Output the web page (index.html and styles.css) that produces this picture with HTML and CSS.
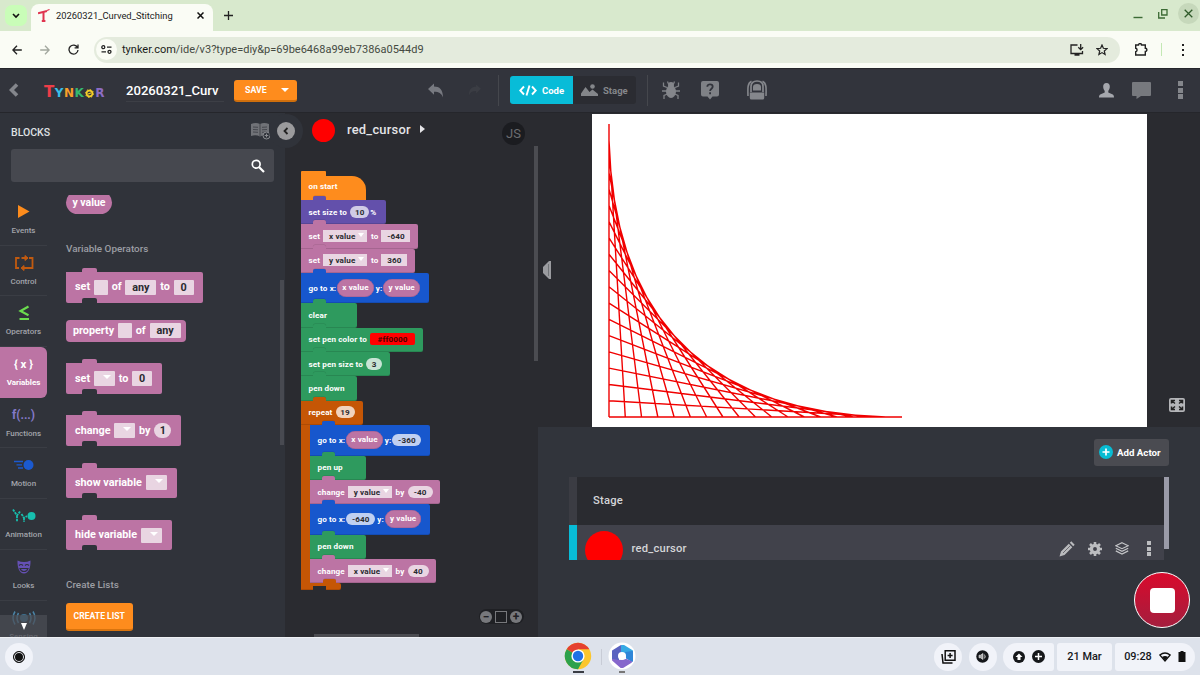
FILE: index.html
```html
<!DOCTYPE html>
<html lang="en">
<head>
    <meta charset="UTF-8">
    <title>20260321_Curved_Stitching</title>
    <link rel="stylesheet" href="styles.css">
</head>
<body>

    <!-- browser -->
    <div class="tabstrip">
        <div class="tab-search"><svg width="8" height="6" viewBox="0 0 8 6"><path d="M1 1l3 3 3-3" fill="none" stroke="#111" stroke-width="1.6"/></svg></div>
        <div class="tab">
            <svg width="12" height="13" viewBox="0 0 12 13"><path d="M0 4.200l9-2.200M5.500 3.500v9M3.800 12h3.600" fill="none" stroke="#e0344f" stroke-width="2"/><path d="M9 1.500l2.500-1" stroke="#e0344f" stroke-width="1.200"/></svg>
            <span class="tab-title">20260321_Curved_Stitching</span>
            <svg width="7" height="7" viewBox="0 0 7 7"><path d="M.5.5l6 6M6.500.5l-6 6" stroke="#111" stroke-width="1.500"/></svg>
        </div>
        <svg class="new-tab" width="9" height="9" viewBox="0 0 9 9"><path d="M4.500 0v9M0 4.500h9" stroke="#222" stroke-width="1.300"/></svg>
        <div class="win-buttons">
            <svg width="10" height="10" viewBox="0 0 10 10"><path d="M.5 8.500h9" stroke="#3c6b35" stroke-width="1.400"/></svg>
            <svg width="10" height="10" viewBox="0 0 10 10"><path d="M3.700.7h5.300v5.300H3.700zM.7 3v6H7" fill="none" stroke="#3c6b35" stroke-width="1.300"/></svg>
            <span class="win-close"><svg width="9" height="9" viewBox="0 0 9 9"><path d="M.7.7l7.600 7.600M8.300.7L.7 8.300" stroke="#2f5a2a" stroke-width="1.300"/></svg></span>
        </div>
    </div>
    <div class="toolbar">
        <svg class="nav" width="10" height="10" viewBox="0 0 10 10"><path d="M9.800 5H1M5 .8L.9 5 5 9.200" fill="none" stroke="#222" stroke-width="1.300"/></svg>
        <svg class="nav" width="10" height="10" viewBox="0 0 10 10"><path d="M.2 5H9M5 .8L9.100 5 5 9.200" fill="none" stroke="#a3a89f" stroke-width="1.300"/></svg>
        <svg class="nav" width="11" height="11" viewBox="0 0 11 11"><path d="M9.500 3.500A4.500 4.500 0 1 0 10 6M10 .5v3.400H6.600" fill="none" stroke="#222" stroke-width="1.300"/></svg>
        <div class="omnibox">
            <span class="site-info"><svg width="11" height="9" viewBox="0 0 11 9"><g fill="none" stroke="#222" stroke-width="1.300"><circle cx="2.300" cy="2.200" r="1.500"/><circle cx="8.500" cy="6.800" r="1.500"/><path d="M6 2.200h4.500M.5 6.800H5"/></g></svg></span>
            <span class="url">tynker.com<i>/ide/v3?type=diy&amp;p=69be6468a99eb7386a0544d9</i></span>
            <svg width="14" height="12" viewBox="0 0 14 12"><path d="M7.500 1H1v8.500h11.500V7M4.500 11h5" fill="none" stroke="#222" stroke-width="1.300"/><path d="M10.700 0v5.500M8.300 3.300l2.400 2.400 2.400-2.400" fill="none" stroke="#222" stroke-width="1.300"/></svg>
            <svg width="12" height="12" viewBox="0 0 12 12"><path d="M6 1l1.400 3.300 3.600.3-2.700 2.400.8 3.500L6 8.600l-3.100 1.900.8-3.500L1 4.600l3.600-.3z" fill="none" stroke="#222" stroke-width="1.200"/></svg>
        </div>
        <svg width="14" height="13" viewBox="0 0 14 13"><path d="M1.700 2h2.800a1.500 1.500 0 0 1 3 0h3.800v3.200a1.600 1.600 0 0 1 0 3.200V12H1.700V8.800a1.800 1.800 0 0 0 0-3.500z" fill="none" stroke="#222" stroke-width="1.400"/></svg>
        <span class="bar-sep"></span>
        <span class="kebab"><b></b><b></b><b></b></span>
    </div>

    <!-- editor header -->
    <div class="header">
        <svg class="back" width="10" height="14" viewBox="0 0 10 14"><path d="M8 1.500L2.500 7 8 12.500" fill="none" stroke="#84868c" stroke-width="3.600"/></svg>
        <div class="logo"><b class="l-t">T</b><b class="l-y">Y</b><b class="l-n">N</b><b class="l-k">K</b><svg width="9" height="9" viewBox="0 0 9 9"><circle cx="4.500" cy="4.500" r="2.900" fill="none" stroke="#f6cf28" stroke-width="1.600"/><circle cx="4.500" cy="4.500" r="4" fill="none" stroke="#f6cf28" stroke-width="1" stroke-dasharray="1.500 1.600"/><path d="M2.500 5.200l4-1.400" stroke="#f6cf28" stroke-width="1.200"/></svg><b class="l-r">R</b></div>
        <div class="project-name">20260321_Curv</div>
        <div class="save">SAVE <i class="caret"></i></div>
        <svg class="undo" width="16" height="15" viewBox="0 0 16 15"><path d="M6 .5v3c5.500 0 9 3 9 11C13.500 10.500 11 8.800 6 8.800v3L0 6z" fill="#777980"/></svg>
        <svg class="redo" width="15" height="12" viewBox="0 0 16 15"><path d="M10 .5v3c-5.500 0-9 3-9 11 1.500-4 4-5.700 9-5.700v3L16 6z" fill="#3b3d44"/></svg>
        <span class="head-sep"></span>
        <div class="modes">
            <div class="mode on"><svg width="18" height="11" viewBox="0 0 18 11"><path d="M5 1.500L1.200 5.500 5 9.500M13 1.500l3.800 4L13 9.500M10.500.5l-3 10" fill="none" stroke="#fff" stroke-width="1.900"/></svg>Code</div>
            <div class="mode"><svg width="17" height="12" viewBox="0 0 17 12"><path d="M0 12V9.500L4.500 3l4 5 3-2.500L17 10v2z" fill="#84868a"/><circle cx="11.500" cy="2.500" r="2.300" fill="#84868a"/></svg>Stage</div>
        </div>
        <span class="head-sep second"></span>
        <svg class="bug" width="18" height="19" viewBox="0 0 18 19"><g fill="none" stroke="#7f8186" stroke-width="1.300"><path d="M5 6.500L1.500 5V1.500M13 6.500L16.500 5V1.500M5 10H0M13 10h5M5.500 13l-3.500 1.500V18M12.500 13l3.500 1.500V18M6.500 3L5.500.5M11.500 3l1-2.500"/></g><ellipse cx="9" cy="10.500" rx="5" ry="6.500" fill="#84868b"/><circle cx="9" cy="4" r="3" fill="#84868b"/></svg>
        <svg class="help" width="18" height="19" viewBox="0 0 18 19"><path d="M2 0h14a2 2 0 0 1 2 2v11.500a2 2 0 0 1-2 2h-4.500L9 18.500l-2.500-3H2a2 2 0 0 1-2-2V2a2 2 0 0 1 2-2z" fill="#7f8186"/><path d="M6.300 5.700C6.300 2.600 11.700 2.600 11.700 5.700c0 2-2.600 2-2.600 4.300M9.100 11.300v2" fill="none" stroke="#32343c" stroke-width="1.800"/></svg>
        <svg class="bag" width="20" height="20" viewBox="0 0 20 20"><path d="M4.500 1.200C.5 3 .7 8 1 16M15.500 1.200c4 1.800 3.800 6.800 3.500 14.800" fill="none" stroke="#85878c" stroke-width="1.600"/><path d="M4 12V6.500C4 3 6.500 1 10 1s6 2 6 5.500V12" fill="none" stroke="#85878c" stroke-width="1.700"/><path d="M6 10.500V7q0-3 4-3t4 3v3.500z" fill="#85878c"/><path d="M2.800 12.500h14.400V18a1.500 1.500 0 0 1-1.500 1.500H4.300A1.500 1.500 0 0 1 2.800 18z" fill="#85878c"/></svg>
        <svg class="user" width="15" height="15" viewBox="0 0 15 15"><path d="M7.500 0C10 0 11 1.800 10.800 4c-.1 2-.9 3-1.500 3.800v1.700l4.500 2c.9.500 1.200 1.500 1.200 3H0c0-1.500.3-2.500 1.200-3l4.500-2V7.800C5 7 4.300 6 4.200 4 4 1.800 5 0 7.500 0z" fill="#a5a7ad"/></svg>
        <svg class="chat" width="19" height="17" viewBox="0 0 19 17"><path d="M1 0h17a1 1 0 0 1 1 1v12a1 1 0 0 1-1 1H9l-4.500 3V14H1a1 1 0 0 1-1-1V1a1 1 0 0 1 1-1z" fill="#77797e"/></svg>
        <span class="dots"><b></b><b></b><b></b></span>
    </div>

    <div class="main">

        <!-- block palette -->
        <div class="palette">
            <div class="palette-head">
                <span class="blocks-title">BLOCKS</span>
                <svg width="20" height="18" viewBox="0 0 20 18"><path d="M0 2q5-2 9 0 4-2 9 0v12q-5-1.500-9 .5-4-2-9-.5z" fill="#707277"/><path d="M9 2v12M2 5l5 .3M2 7.500l5 .3M2 10l5 .3M11 5.300l5-.3M11 7.800l5-.3M11 10.300l5-.3" stroke="#32343b" stroke-width=".7"/><circle cx="15.500" cy="13.500" r="3.500" fill="#30333a" stroke="#8a8c90"/><path d="M15.500 11.700v3.600M13.700 13.500h3.600" stroke="#8a8c90"/></svg>
                <span class="collapse"><svg width="18" height="18" viewBox="0 0 18 18"><circle cx="9" cy="9" r="9" fill="#9b9b9d"/><path d="M10.500 6L7.500 9l3 3" fill="none" stroke="#222" stroke-width="1.800"/></svg></span>
            </div>
            <div class="search"><svg width="14" height="14" viewBox="0 0 14 14"><circle cx="5.200" cy="5.200" r="3.900" fill="none" stroke="#fff" stroke-width="1.700"/><path d="M8 8l5 5" stroke="#fff" stroke-width="2.200"/></svg></div>
            <div class="palette-body">
                <div class="cats">
                    <div class="cat"><svg width="24" height="16" viewBox="0 0 24 16"><path d="M6 1l11.500 6.500L6 14z" fill="#fd8c1c"/></svg>Events</div>
                    <div class="cat"><svg width="24" height="16" viewBox="0 0 24 16"><path d="M7.500 3H4v10h3M17 3h3.500v10H12M10 3h6M15 13h-5" fill="none" stroke="#c05a10" stroke-width="1.800"/><path d="M9 3h5M13 .5L16 3l-3 2.500zM12 10.500L9 13l3 2.500z" fill="#c05a10" stroke="#c05a10"/></svg>Control</div>
                    <div class="cat"><svg width="24" height="16" viewBox="0 0 24 16"><path d="M16.500 1.500L8.500 6l8 4.200M7.500 14h9.500" fill="none" stroke="#6bdc4e" stroke-width="2.100"/></svg>Operators</div>
                    <div class="cat active"><span class="glyph">{ x }</span>Variables</div>
                    <div class="cat"><span class="glyph fn">f(...)</span>Functions</div>
                    <div class="cat"><svg width="24" height="16" viewBox="0 0 24 16"><circle cx="16.500" cy="8" r="5" fill="#1b5ad0"/><path d="M2 4.500h9M4.500 7.800H10M6 11h5" stroke="#1b5ad0" stroke-width="1.300"/></svg>Motion</div>
                    <div class="cat"><svg width="24" height="16" viewBox="0 0 24 16"><circle cx="19.500" cy="8" r="4" fill="#17bfae"/><path d="M1 1.500l4 6 3-4M5 7.500V14M9.500 6l2.500 4 3-2M12 10v4" fill="none" stroke="#17bfae" stroke-width="1.800" stroke-dasharray="2.500 .8"/></svg>Animation</div>
                    <div class="cat"><svg width="24" height="16" viewBox="0 0 24 16"><path d="M5.500 1.500q6.500 3 13 0c.3 7-2 13-6.500 13s-6.800-6-6.500-13z" fill="#6550b4"/><path d="M7 6.500q2-2 4 0M13 6.500q2-2 4 0M8 9.500h8q-1 3-4 3t-4-3z" fill="none" stroke="#2f3239" stroke-width="1.100"/></svg>Looks</div>
                    <div class="cat"><svg width="24" height="16" viewBox="0 0 24 16"><circle cx="12" cy="8" r="4" fill="#3d6f8e"/><path d="M6.500 3q-3 5 0 10M17.500 3q3 5 0 10M3 1.500q-4 6.500 0 13M21 1.500q4 6.500 0 13" fill="none" stroke="#4a83a5" stroke-width="1.500"/></svg>Sensing</div>
                    <div class="cats-more"><svg width="6" height="7" viewBox="0 0 6 7"><path d="M0 0h6L3 7z" fill="#fff"/></svg></div>
                </div>
                <div class="list">
                    <div class="pill">y value</div>
                    <div class="list-title">Variable Operators</div>
                    <div class="pblock w136">set <i class="slot w14"></i> of <i class="slot w31">any</i> to <i class="slot w20">0</i></div>
                    <div class="preporter">property <i class="slot w14"></i> of <i class="slot w31">any</i></div>
                    <div class="pblock w96">set <i class="slot w21"><i class="caret"></i></i> to <i class="slot w20">0</i></div>
                    <div class="pblock w115">change <i class="slot w21"><i class="caret"></i></i> by <i class="slot round">1</i></div>
                    <div class="pblock w111">show variable <i class="slot w21"><i class="caret"></i></i></div>
                    <div class="pblock w106">hide variable <i class="slot w21"><i class="caret"></i></i></div>
                    <div class="list-title lists">Create Lists</div>
                    <div class="create">CREATE LIST</div>
                </div>
                <div class="palette-scroll"></div>
            </div>
        </div>

        <!-- script workspace -->
        <div class="workspace">
            <div class="actor-head">
                <span class="red-dot"></span>
                <span class="actor-name">red_cursor</span>
                <i class="arrow"></i>
                <span class="js">JS</span>
            </div>
            <div class="script">
                <div class="hat">on start</div>
                <div class="block looks w85">set size to <i class="val oval w19">10</i><span>%</span></div>
                <div class="block vars w117">set <i class="val w44">x value<i class="caret"></i></i> to <i class="val w29">-640</i></div>
                <div class="block vars w114">set <i class="val w44">y value<i class="caret"></i></i> to <i class="val w26">360</i></div>
                <div class="block motion w128">go to x:<i class="var">x value</i> <span class="yl">y:</span><i class="var">y value</i></div>
                <div class="block pen w56">clear</div>
                <div class="block pen w122">set pen color to <i class="val hex">#ff0000</i></div>
                <div class="block pen w88">set pen size to <i class="val oval w16">3</i></div>
                <div class="block pen w56">pen down</div>
                <div class="block control w62">repeat <i class="val oval w19">19</i></div>
                <div class="loop">
                    <div class="block motion w120">go to x:<i class="var">x value</i> <span class="yl">y:</span><i class="val oval w29">-360</i></div>
                    <div class="block pen w56">pen up</div>
                    <div class="block vars w130">change <i class="val w44">y value<i class="caret"></i></i> by <i class="val oval w25">-40</i></div>
                    <div class="block motion w120">go to x:<i class="val oval w29">-640</i> <span class="yl">y:</span><i class="var">y value</i></div>
                    <div class="block pen w56">pen down</div>
                    <div class="block vars w126">change <i class="val w44">x value<i class="caret"></i></i> by <i class="val oval w21">40</i></div>
                </div>
                <div class="block control foot"></div>
            </div>
            <div class="v-scroll"></div>
            <div class="h-scroll"></div>
            <div class="zoomer"><b>−</b><i></i><b>+</b></div>
        </div>

        <!-- stage and actors -->
        <div class="right">
            <div class="stage-area">
                <svg class="drag" width="8" height="18" viewBox="0 0 8 18"><path d="M8 0v18H6L0 12V6l6-6z" fill="#9a9b9f"/><path d="M5.500 3v12" stroke="#66686d" stroke-width=".8"/></svg>
                <div class="stage">
                    <svg viewBox="0 0 18 18" width="293" height="293"><path d="M0 0L0 18M0 1L1 18M0 2L2 18M0 3L3 18M0 4L4 18M0 5L5 18M0 6L6 18M0 7L7 18M0 8L8 18M0 9L9 18M0 10L10 18M0 11L11 18M0 12L12 18M0 13L13 18M0 14L14 18M0 15L15 18M0 16L16 18M0 17L17 18M0 18L18 18" fill="none" stroke="#f00000" stroke-width=".086"/></svg>
                </div>
                <svg class="full" width="16" height="14" viewBox="0 0 16 14"><rect width="16" height="14" rx="2" fill="#b4b5b8"/><path d="M2.500 5.500v-3H6M10 2.500h3.500v3M13.500 8.500v3H10M6 11.500H2.500v-3M3 3l3 2.500M13 3l-3 2.500M13 11l-3-2.500M3 11l3-2.500" fill="none" stroke="#222" stroke-width="1.500"/></svg>
            </div>
            <div class="actors">
                <div class="add"><svg width="14" height="14" viewBox="0 0 14 14"><circle cx="7" cy="7" r="7" fill="#08bcd3"/><path d="M7 3.500v7M3.500 7h7" stroke="#fff" stroke-width="1.700"/></svg>Add Actor</div>
                <div class="actor-list">
                    <div class="rows">
                        <div class="row">Stage</div>
                        <div class="row selected">
                            <span class="big-dot"></span>
                            <span>red_cursor</span>
                            <span class="row-icons">
                                <svg width="16" height="16" viewBox="0 0 16 16"><path d="M2 10.500l7.800-7.800 3.500 3.500-7.800 7.800L.5 15.500zM10.800 1.800L12.300.3l3.400 3.400-1.500 1.500z" fill="#b9babd"/><path d="M4 12l7.500-7.500" stroke="#55565c" stroke-width=".8"/></svg>
                                <svg width="14" height="14" viewBox="0 0 14 14"><circle cx="7" cy="7" r="3.600" fill="none" stroke="#bcbdc0" stroke-width="3.300"/><path d="M7 0v3M7 11v3M0 7h3M11 7h3M2 2l2.200 2.200M9.800 9.800L12 12M12 2L9.800 4.200M4.200 9.800L2 12" stroke="#bcbdc0" stroke-width="2.600"/></svg>
                                <svg width="14" height="13" viewBox="0 0 14 13"><path d="M7 .7l6.200 3L7 6.700.8 3.700zM.8 6.300L7 9.300l6.200-3M.8 8.900L7 12l6.200-3.100" fill="none" stroke="#c4c5c8" stroke-width="1.200"/></svg>
                                <span class="dots small"><b></b><b></b><b></b></span>
                            </span>
                        </div>
                    </div>
                    <div class="actor-scroll"></div>
                </div>
                <div class="stop"><i></i></div>
            </div>
        </div>
    </div>

    <!-- shelf -->
    <div class="shelf">
        <div class="launcher"><i></i></div>
        <div class="apps">
            <div class="app">
                <svg width="28" height="28" viewBox="0 0 28 28"><circle cx="14" cy="14" r="13.200" fill="#fbc62d"/><path d="M14 14L2.700 7.200A13.200 13.200 0 0 1 25.300 7.200H14z" fill="#e5412f"/><path d="M14 14L2.700 7.200A13.200 13.200 0 0 0 14 27.200l5.500-10z" fill="#2ca14b"/><circle cx="14" cy="14" r="6.600" fill="#fff"/><circle cx="14" cy="14" r="5.200" fill="#2071e6"/></svg>
                <i class="run"></i>
            </div>
            <span class="app-sep"></span>
            <div class="app">
                <svg width="28" height="28" viewBox="0 0 28 28"><circle cx="14" cy="14" r="13.500" fill="#fff"/><g stroke-linejoin="round" stroke-width="2"><path d="M5 9l8-5v6l-3 3v7l-5-3z" fill="#5a62c0" stroke="#5a62c0"/><path d="M14 4h2l8 5v4l-6-3h-4z" fill="#36a9e4" stroke="#36a9e4"/><path d="M24 10v9l-5-3-1-5z" fill="#2f86d8" stroke="#2f86d8"/><path d="M5 18l5 1 8-1 5 2-8 5h-2z" fill="#8667cc" stroke="#8667cc"/></g><circle cx="14" cy="14" r="4" fill="#fff"/></svg>
                <i class="run short"></i>
            </div>
        </div>
        <div class="tray">
            <span class="bubble"><svg width="15" height="14" viewBox="0 0 15 14"><path d="M4.200.8h9.800v9.500H4.200zM9.100 3v5M6.600 5.500h5" fill="none" stroke="#111" stroke-width="1.500"/><path d="M1 4l1 9h9.500" fill="none" stroke="#111" stroke-width="1.500"/></svg></span>
            <span class="bubble"><svg width="13" height="13" viewBox="0 0 13 13"><circle cx="6.500" cy="6.500" r="6.200" fill="#15171a"/><path d="M3 5.200h1.500L7 3.500v6L4.500 7.800H3zM8.500 4.500q1.500 2 0 4" fill="#aaa" stroke="#eee" stroke-width=".6"/></svg></span>
            <span class="group g-left"><svg width="12" height="12" viewBox="0 0 12 12"><circle cx="6" cy="6" r="6" fill="#15171a"/><path d="M6 2.500L9.500 6H7.500v3h-3V6h-2z" fill="#fff"/></svg><svg width="13" height="13" viewBox="0 0 13 13"><circle cx="6.500" cy="6.500" r="6.500" fill="#15171a"/><path d="M6.500 3v7M3 6.500h7" stroke="#fff" stroke-width="1.500"/></svg></span>
            <span class="group g-date">21 Mar</span>
            <span class="group g-time">09:28 <svg width="12" height="10" viewBox="0 0 12 10"><path d="M.8 3q5.200-4 10.400 0L6 9z" fill="none" stroke="#111" stroke-width="1.300"/><path d="M3 5q3-2 6 0L6 8.500z" fill="#111"/></svg><svg width="8" height="11" viewBox="0 0 8 11"><path d="M2.500 0h3v1H7.500v10H.5V1h2z" fill="#111"/></svg></span>
        </div>
    </div>
</body>
</html>
```

FILE: styles.css
```css
* {
    box-sizing: border-box;
}

body {
    margin: 0;
    width: 1200px;
    height: 675px;
    overflow: hidden;
    background: #2a2b30;
    font-family: Roboto, "Liberation Sans", sans-serif;
    color: white;
}

i {
    font-style: normal;
}

svg {
    display: block;
    flex: none;
}

/* browser */
.tabstrip {
    display: flex;
    align-items: center;
    height: 31px;
    background: #d8e9cd;
    padding-left: 5px;
}

.tab-search {
    display: flex;
    align-items: center;
    justify-content: center;
    width: 22px;
    height: 21px;
    border-radius: 7px;
    background: #c9fdb8;
}

.tab {
    display: flex;
    align-items: center;
    align-self: flex-end;
    width: 182px;
    height: 27px;
    margin-left: 4px;
    padding: 0 9px 4px 7px;
    border-radius: 8px 8px 0 0;
    background: #fafcf5;
}

.tab-title {
    flex: 1;
    margin-left: 6px;
    font-size: 9.400px;
    color: #222;
}

.new-tab {
    margin-left: 11px;
}

.win-buttons {
    display: flex;
    align-items: center;
    gap: 15px;
    margin-left: auto;
    margin-bottom: 4px;
    padding-right: 1px;
}

.win-close {
    display: flex;
    align-items: center;
    justify-content: center;
    width: 21px;
    height: 21px;
    margin-left: -5px;
    border-radius: 50%;
    background: #c6d8bb;
}

.toolbar {
    display: flex;
    align-items: center;
    height: 37px;
    padding-left: 12px;
    background: #fafcf5;
}

.nav {
    margin-right: 18px;
}

.nav + .nav + .nav {
    margin-right: 15px;
}

.omnibox {
    display: flex;
    align-items: center;
    width: 1026px;
    height: 26px;
    margin-right: 14px;
    padding: 0 12px 0 2px;
    border-radius: 13px;
    background: #e4ebdd;
}

.site-info {
    display: flex;
    align-items: center;
    justify-content: center;
    width: 21px;
    height: 21px;
    border-radius: 50%;
    background: #fafcf5;
}

.url {
    flex: 1;
    margin-left: 5px;
    font-size: 11px;
    color: #1a1c19;
}

.url i {
    color: #454a42;
}

.omnibox > svg + svg {
    margin-left: 12px;
}

.bar-sep {
    width: 1px;
    height: 13px;
    margin: 0 20px 0 13px;
    background: #c3e8b4;
}

.kebab b {
    display: block;
    width: 2px;
    height: 2px;
    margin: 3px 0;
    background: #222;
}

/* editor header */
.header {
    display: flex;
    align-items: center;
    height: 45px;
    padding-bottom: 1px;
    border-bottom: 1px solid #25262b;
    border-top: 1px solid #25262b;
    background: #32343c;
}

.back {
    margin-left: 9px;
}

.logo {
    display: flex;
    align-items: baseline;
    gap: .500px;
    width: 62px;
    margin: 3px 0 0 25px;
    font: bold 12px "DejaVu Sans", sans-serif;
}

.logo svg {
    align-self: center;
    margin: 3px 1px 0 .500px;
}

.l-t { color: #ee3d48; font-size: 15px; }
.l-y { color: #38bfe8; }
.l-n { color: #f9a02a; }
.l-k { color: #35b870; }
.l-r { color: #8d6cc4; }

.project-name {
    width: 98px;
    margin-left: 20px;
    padding: 3px 0 2px;
    border-bottom: 1px solid #3d3f46;
    font-size: 13.100px;
    font-weight: 500;
    line-height: 17px;
}

.caret {
    display: block;
    border: 4px solid transparent;
    border-top: 4px solid white;
    border-bottom: 0;
}

.save {
    display: flex;
    align-items: center;
    justify-content: space-between;
    width: 63px;
    height: 22px;
    margin: 1px 0 0 10px;
    padding: 1px 8px 0 11px;
    border-bottom: 2px solid #d06f0c;
    border-radius: 3px;
    background: #fe8c1d;
    font-size: 8.800px;
    font-weight: bold;
}

.undo {
    margin-left: 131px;
}

.redo {
    margin-left: 23px;
}

.head-sep {
    width: 1px;
    height: 31px;
    margin-left: 16px;
    background: #45474d;
}

.modes {
    display: flex;
    height: 28px;
    margin-left: 11px;
    border-radius: 3px;
    overflow: hidden;
    background: #2b2c32;
}

.mode {
    display: flex;
    align-items: center;
    gap: 5px;
    width: 63px;
    padding-left: 8px;
    font-size: 9.500px;
    font-weight: bold;
    color: #85878b;
}

.mode.on {
    padding-left: 9px;
    background: #08bcd8;
    color: white;
}

.head-sep.second {
    margin-left: 11px;
}

.bug { margin-left: 14px; }
.help { margin-left: 21px; }
.bag { margin-left: 28px; }
.user { margin-left: 332px; }
.chat { margin-left: 18px; }

.dots {
    margin-left: 27px;
}

.dots b {
    display: block;
    width: 5px;
    height: 5px;
    margin: 1.500px 0;
    background: #84868b;
}

/* palette */
.main {
    display: flex;
    height: 524px;
}

.palette {
    width: 284.500px;
    height: 524px;
    background: #30333a;
}

.palette-head {
    display: flex;
    align-items: center;
    height: 36px;
    padding-left: 11px;
    font-size: 10.500px;
    font-weight: 500;
    color: #dfe0e3;
}

.blocks-title {
    padding-top: 3px;
}

.palette-head > svg {
    margin-left: auto;
}

.collapse {
    position: relative;
    z-index: 1;
    margin: -1px -18px 0 -2px;
    padding: 8px;
    border-radius: 50%;
    background: #30333a;
}

.search {
    display: flex;
    align-items: center;
    justify-content: flex-end;
    width: 263px;
    height: 33px;
    margin-left: 11px;
    padding-right: 9px;
    border-radius: 3px;
    background: #46484f;
}

.palette-body {
    display: flex;
    height: 442px;
    margin-top: 13px;
    overflow: hidden;
}

.cats {
    position: relative;
    width: 47px;
    height: 442px;
    overflow: hidden;
}

.cat {
    display: flex;
    flex-direction: column;
    align-items: center;
    height: 50.700px;
    padding-top: 9px;
    border-bottom: 1px solid #3a3d44;
    font-size: 8px;
    font-weight: 500;
    line-height: 11px;
    color: #a2a4aa;
}

.cat svg,
.glyph {
    height: 16px;
    margin-bottom: 5px;
}

.glyph {
    font-size: 11.500px;
    font-weight: bold;
    line-height: 16px;
}

.fn {
    font-size: 12px;
    color: #8479c8;
}

.cat.active {
    border: 0;
    border-radius: 0 6px 6px 0;
    background: #bc74a4;
    color: white;
    font-weight: bold;
}

.cats-more {
    display: flex;
    position: absolute;
    left: 0;
    bottom: 0;
    align-items: center;
    justify-content: center;
    width: 47px;
    height: 22px;
    background: rgba(76, 79, 86, .7);
}

.list {
    width: 215px;
    padding-left: 19px;
    font-size: 10.800px;
    font-weight: bold;
}

.pill {
    width: 46px;
    height: 23px;
    margin-top: -4px;
    border-radius: 12px;
    background: #bc74a4;
    line-height: 23px;
    text-align: center;
    font-size: 10.500px;
}

.list-title {
    margin: 28px 0 16px;
    font-size: 9.900px;
    font-weight: 500;
    line-height: 14px;
    color: #9c9ea4;
}

.pblock,
.preporter {
    display: flex;
    align-items: center;
    gap: 3.800px;
    height: 30.800px;
    padding: 0 0 1px 9px;
    border-radius: 0 2px 2px 2px;
    background: #bc74a4;
    white-space: nowrap;
}

.pblock {
    position: relative;
    margin-bottom: 21.300px;
}

.pblock::before,
.pblock::after {
    content: "";
    position: absolute;
    left: 16px;
    width: 15px;
    height: 5px;
    border-radius: 2px 2px 0 0;
}

.pblock::before {
    top: -4.500px;
    background: #bc74a4;
}

.pblock::after {
    bottom: 0;
    background: #30333a;
}

.pblock.w136 {
    margin-bottom: 17px;
}

.preporter {
    width: 120px;
    height: 22px;
    margin-bottom: 21.600px;
    padding-left: 7px;
    border-radius: 4px;
}

.slot {
    display: flex;
    align-items: center;
    justify-content: center;
    flex: none;
    height: 15px;
    margin-top: 1px;
    border-radius: 1px;
    background: #e9d5e2;
    font-weight: bold;
    color: #2a2b30;
}

.slot.round {
    width: 17px;
    border-radius: 8px;
}

.slot .caret {
    margin: -3px 0 0 5px;
}

.lists {
    margin: 27.500px 0 11.500px;
}

.create {
    width: 66.500px;
    height: 28px;
    border-bottom: 2px solid #d9740e;
    border-radius: 3px;
    background: #fe8c1d;
    font-size: 8.600px;
    line-height: 26px;
    text-align: center;
}

.palette-scroll {
    width: 4px;
    height: 165px;
    margin: 85px 0 0 18px;
    background: #484a51;
}

/* workspace */
.workspace {
    position: relative;
    width: 253.500px;
    height: 524px;
    background: #2a2b30;
}

.actor-head {
    display: flex;
    align-items: center;
    height: 36px;
    padding: 0 0 2px 27.500px;
}

.red-dot {
    width: 23px;
    height: 23px;
    border-radius: 50%;
    background: red;
}

.actor-name {
    margin: -2px 0 0 12px;
    font-size: 12.900px;
    font-weight: 500;
    letter-spacing: .25px;
    color: #e4e4e7;
}

.arrow {
    margin: -2px 0 0 9px;
    border: 4px solid transparent;
    border-left: 5px solid #e4e4e7;
    border-right: 0;
}

.js {
    width: 23px;
    height: 23px;
    margin: 7px 13px 0 auto;
    border-radius: 50%;
    background: #1b1c20;
    font-size: 13px;
    line-height: 24px;
    text-align: center;
    color: #6b6c70;
}

.script {
    margin: 26.500px 0 0 16.500px;
    font-size: 8.100px;
    font-weight: bold;
    letter-spacing: .12px;
}

.hat {
    position: relative;
    width: 65px;
    height: 24.500px;
    padding: 5px 0 0 7.500px;
    border-radius: 0 14px 0 0;
    background: #fe8c1d;
}

.hat::before {
    content: "";
    position: absolute;
    left: 0;
    top: -4.500px;
    width: 25px;
    height: 5px;
    border-radius: 1px 1px 0 0;
    background: #fe8c1d;
}

.block {
    display: flex;
    position: relative;
    align-items: center;
    height: 24.300px;
    padding: 0 0 1px 7.500px;
    border-radius: 0 2px 2px 0;
    box-shadow: inset 0 -1px 0 rgba(0, 0, 0, .12);
    white-space: pre;
}

.block::before {
    content: "";
    position: absolute;
    left: 12px;
    top: -4px;
    width: 13px;
    height: 5px;
    border-radius: 2px 2px 0 0;
    background: inherit;
    box-shadow: 0 -.500px 0 rgba(0, 0, 0, .15);
}

.looks { background: #6350ab; }
.vars { background: #bc74a4; }
.pen { background: #2e9a5e; }
.control { background: #c55605; }

.motion {
    height: 30.600px;
    background: #1757cd;
}

.val {
    display: flex;
    align-items: center;
    justify-content: center;
    flex: none;
    height: 12px;
    margin: 0 1.500px 0 1px;
    background: #e9d5e2;
    font-weight: bold;
    color: #2a2b30;
}

.val .caret {
    margin: -2px -3px 0 3px;
    border-width: 4px 3px 0;
}

.oval { border-radius: 6px; }
.looks .val { background: #d0cbe6; }
.motion .val { background: #c0d0f1; }
.pen .val { background: #c8e4d5; }
.control .val { background: #f1d3bd; }

.looks .val {
    margin-right: 1px;
}

.pen .hex {
    width: 45px;
    border-radius: 2px;
    background: red;
    color: #4a0000;
}

.var {
    flex: none;
    width: 36.500px;
    height: 18px;
    margin: 0 1.500px 0 1px;
    border-radius: 9px;
    background: #bc74a4;
    box-shadow: inset 0 0 0 .500px #9a5c93;
    line-height: 17px;
    text-align: center;
}

.yl {
    margin-left: .500px;
}

.loop {
    padding-left: 9px;
    background: linear-gradient(90deg, #c55605 10px, transparent 10px);
}

.foot {
    width: 40px;
    height: 7px;
}

.foot::before {
    left: 22px;
}

.foot::after {
    content: "";
    position: absolute;
    left: 12px;
    bottom: 0;
    width: 13px;
    height: 4px;
    background: #2a2b30;
}

.w14 { width: 14px; }
.w16 { width: 16px; }
.w19 { width: 19px; }
.w20 { width: 20px; }
.w21 { width: 21px; }
.w25 { width: 25px; }
.w26 { width: 26px; }
.w29 { width: 29px; }
.w31 { width: 31px; }
.w44 { width: 44px; }
.w56 { width: 56px; }
.w62 { width: 62px; }
.w85 { width: 85px; }
.w88 { width: 88.500px; }
.w96 { width: 96px; }
.w106 { width: 106px; }
.w111 { width: 111px; }
.w114 { width: 114px; }
.w115 { width: 115px; }
.w117 { width: 117px; }
.w120 { width: 120px; }
.w122 { width: 122px; }
.w126 { width: 126px; }
.w128 { width: 128px; }
.w130 { width: 129.500px; }
.w136 { width: 136.500px; }

.v-scroll {
    position: absolute;
    right: 0;
    top: 33px;
    width: 4px;
    height: 215px;
    background: #4b4c51;
}

.h-scroll {
    position: absolute;
    left: 29px;
    bottom: 0;
    width: 105px;
    height: 3px;
    background: #4b4c51;
}

.zoomer {
    display: flex;
    position: absolute;
    right: 14.500px;
    bottom: 13px;
    align-items: center;
    gap: 3px;
    padding: 1.500px;
    border-radius: 8px;
    background: #1f2024;
}

.zoomer b {
    width: 12px;
    height: 12px;
    border-radius: 50%;
    background: #77787c;
    font-size: 12px;
    line-height: 12px;
    text-align: center;
    color: #1f2024;
}

.zoomer i {
    width: 12px;
    height: 12px;
    border: 1px solid #77787c;
}

/* right side */
.right {
    flex: 1;
}

.stage-area {
    display: flex;
    height: 314px;
    background: #2a2b30;
}

.drag {
    align-self: center;
    margin-left: 5px;
}

.stage {
    width: 555px;
    height: 313px;
    margin: 1px 0 0 41px;
    padding: 10px 0 0 17px;
    background: white;
}

.stage svg {
    overflow: visible;
}

.full {
    align-self: flex-end;
    margin: 0 0 15px 22px;
}

.actors {
    position: relative;
    height: 210px;
    padding: 12px 31px 0;
    background: #31343b;
}

.add {
    display: flex;
    align-items: center;
    gap: 4px;
    width: 75px;
    height: 27px;
    margin-left: auto;
    padding: 0 0 1px 5px;
    border-radius: 3px;
    background: #4a4b51;
    font-size: 9.700px;
    font-weight: bold;
    white-space: nowrap;
}

.actor-list {
    display: flex;
    height: 83px;
    margin-top: 11px;
    overflow: hidden;
}

.rows {
    flex: 1;
}

.row {
    display: flex;
    align-items: center;
    height: 48px;
    padding: 0 0 1px 16px;
    border-left: 8px solid #3b3c43;
    background: #2a2b30;
    font-size: 11.200px;
    font-weight: 500;
    letter-spacing: .200px;
    color: #d4d5d8;
}

.row.selected {
    padding-left: 8px;
    border-left-color: #08bcd8;
    background: #41424b;
}

.big-dot {
    width: 38px;
    height: 38px;
    margin: 2px 8.500px 0 0;
    border-radius: 50%;
    background: red;
}

.row-icons {
    display: flex;
    align-items: center;
    gap: 13px;
    margin: 0 13px 0 auto;
}

.dots.small {
    margin-left: 5px;
}

.small b {
    width: 4px;
    height: 4px;
    background: #bcbdc0;
}

.actor-scroll {
    width: 5px;
    height: 72px;
    background: #9a9ba8;
}

.stop {
    display: flex;
    position: absolute;
    right: 10px;
    bottom: 9px;
    align-items: center;
    justify-content: center;
    width: 56px;
    height: 56px;
    border: 1.500px solid white;
    border-radius: 50%;
    background: linear-gradient(#d90a2c, #a41e3e);
}

.stop i {
    width: 25px;
    height: 25px;
    border-radius: 4px;
    background: white;
}

/* shelf */
.shelf {
    display: flex;
    align-items: center;
    height: 38px;
    padding: 0 5px;
    border-top: 1px solid #eef0f4;
    background: #dde2eb;
}

.launcher {
    display: flex;
    align-items: center;
    justify-content: center;
    width: 28px;
    height: 28px;
    border-radius: 50%;
    background: #f1f3f9;
}

.launcher i {
    width: 12px;
    height: 12px;
    border: 1px solid #111;
    border-radius: 50%;
    background: #111;
    box-shadow: inset 0 0 0 1px #f1f3f9;
}

.apps {
    display: flex;
    align-items: center;
    margin-left: 531px;
}

.app {
    padding-top: 2px;
}

.run {
    display: block;
    width: 11px;
    height: 2px;
    margin: 1px auto 0;
    background: #3a3d44;
}

.run.short {
    width: 6px;
    background: #777;
}

.app-sep {
    width: 1px;
    height: 16px;
    margin: 0 6px 0 9px;
    background: #c8ccd6;
}

.tray {
    display: flex;
    align-items: center;
    margin-left: auto;
    font-size: 10.900px;
    font-weight: 500;
    color: #16181c;
}

.bubble,
.group {
    display: flex;
    align-items: center;
    justify-content: center;
    width: 28px;
    height: 28px;
    margin-right: 6.500px;
    border-radius: 14px;
    background: #f1f3f9;
}

.group {
    gap: 7px;
    width: 55px;
    margin-right: 3px;
    border-radius: 3px;
}

.g-left {
    width: 51px;
    border-radius: 14px 3px 3px 14px;
}

.g-time {
    width: 80px;
    margin-right: 0;
    border-radius: 3px 14px 14px 3px;
}
```
